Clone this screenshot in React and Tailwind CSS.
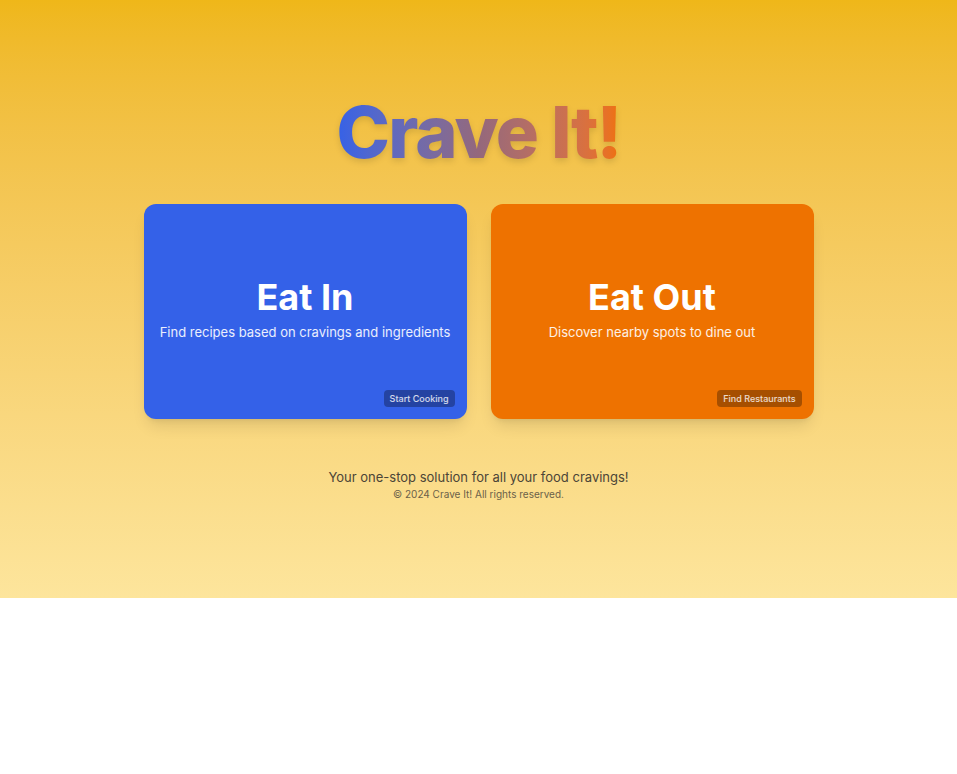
export default function App() {
  const cards = [
    {
      title: "Eat In",
      text: "Find recipes based on cravings and ingredients",
      action: "Start Cooking",
      bg: "bg-[#3461e8]",
    },
    {
      title: "Eat Out",
      text: "Discover nearby spots to dine out",
      action: "Find Restaurants",
      bg: "bg-[#ee7200]",
    },
  ];

  return (
    <div className="font-['Inter',sans-serif]">
      <div className="flex h-[598px] flex-col items-center bg-gradient-to-b from-[#efb719] to-[#fde59c] pt-[96px]">
        <h1 className="bg-gradient-to-r from-[#3461e8] via-[#94687c] to-[#f07100] bg-clip-text pb-2 text-[72px] leading-none font-extrabold tracking-tight text-transparent drop-shadow-md">
          Crave It!
        </h1>
        <div className="mt-[28px] grid w-[670px] grid-cols-2 gap-6">
          {cards.map((c) => (
            <div
              key={c.title}
              className={`${c.bg} relative flex h-[215px] flex-col items-center justify-center rounded-xl pb-1 text-white shadow-lg`}
            >
              <h2 className="text-4xl font-bold">{c.title}</h2>
              <p className="mt-1.5 text-[13px] text-white/90">{c.text}</p>
              <button className="absolute right-3 bottom-3 rounded bg-black/30 px-1.5 py-0.5 text-[9px] font-medium text-white/80">
                {c.action}
              </button>
            </div>
          ))}
        </div>
        <div className="mt-[49px] flex flex-col items-center">
          <p className="text-[13px] text-[#4b4537]">Your one-stop solution for all your food cravings!</p>
          <p className="-mt-px text-[10px] text-[#6b6149]">© 2024 Crave It! All rights reserved.</p>
        </div>
      </div>
    </div>
  );
}
